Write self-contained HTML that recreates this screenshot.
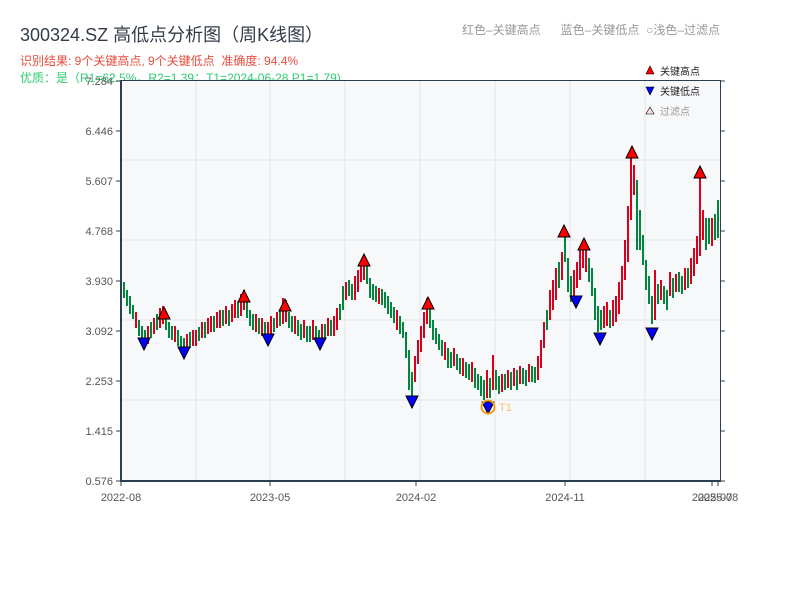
<!DOCTYPE html>
<html><head><meta charset="utf-8"><style>
body{margin:0;width:800px;height:600px;background:#fff;overflow:hidden;font-family:"Liberation Sans","Noto Sans CJK SC",sans-serif;position:relative}
.t{position:absolute;white-space:nowrap}
</style></head><body>
<div class="t" style="left:20px;top:21px;font-size:18px;color:#333d4a">300324.SZ 高低点分析图（周K线图）</div>
<div class="t" style="left:20px;top:52px;font-size:12px;color:#e74c3c">识别结果: 9个关键高点, 9个关键低点&nbsp;&nbsp;准确度: 94.4%</div>
<div class="t" style="left:20px;top:69px;font-size:12px;color:#2ecc71">优质：是（R1=62.5%，R2=1.39；T1=2024-06-28 P1=1.79)</div>
<div class="t" style="left:462px;top:21px;font-size:12px;color:#999">红色–关键高点&nbsp;&nbsp;&nbsp;&nbsp;&nbsp;&nbsp;蓝色–关键低点&nbsp;&nbsp;○浅色–过滤点</div>
<svg width="800" height="600" style="position:absolute;left:0;top:0" font-family="Liberation Sans, Noto Sans CJK SC, sans-serif">
<rect x="121" y="81" width="599" height="400" fill="#f7f8fa"/>
<g stroke="#e3e5ea">
<line x1="196" y1="81" x2="196" y2="481"/><line x1="270" y1="81" x2="270" y2="481"/><line x1="345" y1="81" x2="345" y2="481"/><line x1="420" y1="81" x2="420" y2="481"/><line x1="495" y1="81" x2="495" y2="481"/><line x1="570" y1="81" x2="570" y2="481"/><line x1="645" y1="81" x2="645" y2="481"/>
<line x1="121" y1="160" x2="720" y2="160"/><line x1="121" y1="240" x2="720" y2="240"/><line x1="121" y1="320" x2="720" y2="320"/><line x1="121" y1="400" x2="720" y2="400"/>
</g>
<path stroke="#00873c" stroke-width="2" fill="none" d="M121 278V292M124 282V298M127 290V306M130 296V314M133 305V319M139 320V336M142 326V342M145 330V346M151 322V338M157 314V330M166 314V330M169 322V338M172 326V340M178 330V346M181 336V350M184 338V354M190 332V348M199 327V341M205 322V338M214 316V332M223 310V326M229 310V326M238 302V318M247 302V318M250 310V326M253 314V330M259 318V334M265 322V338M274 318V332M280 310V326M289 312V328M292 316V332M298 320V336M301 324V340M307 326V342M310 326V342M316 326V342M319 330V346M325 324V340M331 320V336M340 304V320M343 286V310M349 280V296M352 284V300M367 266V284M370 278V298M373 284V300M376 286V302M382 289V305M385 292V308M388 296V314M391 302V318M394 307V323M400 316V334M403 322V338M406 332V358M409 350V390M412 372V398M430 308V328M433 320V340M436 328V344M439 334V350M442 340V356M448 348V368M451 352V368M457 354V370M460 358V374M466 362V378M469 364V380M475 368V388M478 374V390M481 376V396M484 380V400M490 378V398M496 370V390M499 376V394M505 374V390M511 372V390M517 370V390M523 368V384M526 370V386M532 366V382M535 367V383M547 310V330M559 262V288M565 236V262M568 258V292M571 276V302M589 258V282M592 268V296M595 288V320M598 306V332M601 310V330M610 310V328M637 180V250M640 210V250M643 235V265M646 260V290M649 276V304M652 296V324M658 284V304M664 286V304M667 290V310M673 278V298M679 272V292M682 276V294M688 268V288M706 218V250M709 218V244M715 214V240M718 200V238"/>
<path stroke="#d9001b" stroke-width="2" fill="none" d="M136 312V328M148 326V344M154 318V334M160 308V328M163 306V324M175 326V342M187 334V350M193 330V346M196 330V346M202 322V338M208 318V334M211 316V332M217 312V328M220 310V328M226 306V324M232 304V322M235 300V318M241 294V316M244 290V310M256 314V332M262 318V336M268 322V342M271 316V334M277 312V328M283 298V324M286 300V322M295 316V334M304 320V338M313 320V340M322 324V342M328 318V336M334 316V336M337 308V330M346 282V300M355 276V300M358 270V292M361 262V282M364 256V280M379 288V304M397 310V330M415 356V382M418 340V364M421 326V352M424 312V338M427 298V324M445 342V360M454 348V366M463 358V376M472 362V382M487 370V398M493 355V390M502 374V392M508 370V388M514 368V386M520 366V384M529 364V382M538 356V380M541 340V368M544 322V348M550 290V320M553 280V310M556 268V300M562 252V280M574 270V300M577 262V288M580 250V280M583 244V268M586 248V272M604 306V328M607 302V326M613 300V326M616 296V322M619 282V314M622 266V300M625 240V280M628 206V262M631 156V220M634 165V195M655 270V320M661 280V300M670 272V296M676 274V292M685 268V290M691 258V284M694 248V276M697 236V264M700 170V256M703 210V240M712 218V246"/>
<g fill="#f00" stroke="#000">
<polygon points="164,307 158,319 170,319"/><polygon points="244,290 238,302 250,302"/><polygon points="285,299 279,311 291,311"/><polygon points="364,254 358,266 370,266"/><polygon points="428,297 422,309 434,309"/><polygon points="564,225 558,237 570,237"/><polygon points="584,238 578,250 590,250"/><polygon points="632,146 626,158 638,158"/><polygon points="700,166 694,178 706,178"/>
</g>
<g fill="#00f" stroke="#000">
<polygon points="144,350 138,338 150,338"/><polygon points="184,359 178,347 190,347"/><polygon points="268,346 262,334 274,334"/><polygon points="320,350 314,338 326,338"/><polygon points="412,408 406,396 418,396"/><polygon points="488,414 482,402 494,402"/><polygon points="576,308 570,296 582,296"/><polygon points="600,345 594,333 606,333"/><polygon points="652,340 646,328 658,328"/>
</g>
<circle cx="488" cy="407" r="6.5" fill="none" stroke="#f39c12" stroke-width="2"/>
<text x="499" y="411" font-size="11" fill="#f8c471">T1</text>
<line x1="121" y1="80.5" x2="720" y2="80.5" stroke="#2c3e50"/>
<line x1="720.5" y1="80" x2="720.5" y2="481" stroke="#2c3e50"/>
<line x1="121" y1="80" x2="121" y2="482" stroke="#2c3e50" stroke-width="2"/>
<line x1="120" y1="481" x2="721" y2="481" stroke="#2c3e50" stroke-width="2"/>
<g stroke="#2c3e50">
<path d="M116 81H121M116 131H121M116 181H121M116 231H121M116 281H121M116 331H121M116 381H121M116 431H121M116 481H121M720 81H725M720 131H725M720 181H725M720 231H725M720 281H725M720 331H725M720 381H725M720 431H725M720 481H725M121 481V486M270 481V486M416 481V486M565 481V486M712 481V486M718 481V486"/>
</g>
<g font-size="11" fill="#555" text-anchor="end">
<text x="113" y="85">7.284</text><text x="113" y="135">6.446</text><text x="113" y="185">5.607</text><text x="113" y="235">4.768</text><text x="113" y="285">3.930</text><text x="113" y="335">3.092</text><text x="113" y="385">2.253</text><text x="113" y="435">1.415</text><text x="113" y="485">0.576</text>
</g>
<g font-size="11" fill="#555" text-anchor="middle">
<text x="121" y="501">2022-08</text><text x="270" y="501">2023-05</text><text x="416" y="501">2024-02</text><text x="565" y="501">2024-11</text><text x="712" y="501">2025-07</text><text x="718" y="501">2025-08</text>
</g>
<polygon points="650,66 646,74 654,74" fill="#f00" stroke="#000" stroke-width=".6"/><text x="660" y="75" font-size="10" fill="#222">关键高点</text>
<polygon points="650,95 646,87 654,87" fill="#00f" stroke="#000" stroke-width=".6"/><text x="660" y="95" font-size="10" fill="#222">关键低点</text>
<polygon points="650,107 646,114 654,114" fill="#fdd" stroke="#000" stroke-width=".6"/><text x="660" y="115" font-size="10" fill="#999">过滤点</text>
</svg>
</body></html>
